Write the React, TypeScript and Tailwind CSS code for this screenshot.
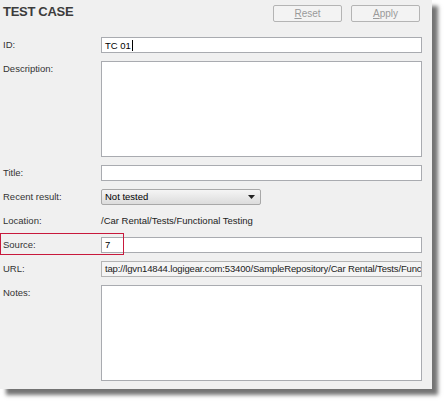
const labelCls = 'w-[98px] shrink-0 leading-[16px] text-[#333]';
const boxCls = 'h-[16px] w-[321px] border border-[#a9abb0] bg-white px-[3px] leading-[14px] text-black';

function Row({ label, children, tall }: { label: string; children: React.ReactNode; tall?: boolean }) {
    return (
        <div className={`flex items-start ${tall ? 'h-[96px]' : 'h-[16px]'}`}>
            <div className={labelCls}>{label}</div>
            {children}
        </div>
    );
}

function Btn({ first, rest }: { first: string; rest: string }) {
    return (
        <button className='h-[17px] w-[69px] rounded-[2px] border border-[#b4b4b4] bg-[#f3f3f3] text-center text-[10px] leading-[15px] text-[#9a9a9a]'>
            <span className='underline'>{first}</span>{rest}
        </button>
    );
}

const App = () => {
    return (
        <div className='h-[404px] w-[448px] bg-white font-["Liberation_Sans",Arial,sans-serif] text-[9.5px]'>
            <div className='relative h-[389px] w-[432px] bg-[#f0f0f0] pl-[3px] shadow-[6px_6px_4px_rgba(0,0,0,0.55)]'>
                {/* header */}
                <div className='flex h-[37px] items-start justify-between pr-[12px]'>
                    <h1 className='pt-[4px] text-[13px] font-bold leading-[16px] tracking-[-0.3px] text-[#3c3c3c]'>TEST CASE</h1>
                    <div className='flex gap-[9px] pt-[5px]'>
                        <Btn first='R' rest='eset' />
                        <Btn first='A' rest='pply' />
                    </div>
                </div>

                <div className='flex flex-col gap-[8px]'>
                    <Row label='ID:'>
                        <div className={boxCls}>
                            TC 01<span className='ml-[1px] inline-block h-[11px] w-[1px] translate-y-[2px] bg-black' />
                        </div>
                    </Row>
                    <Row label='Description:' tall>
                        <div className='h-[96px] w-[321px] border border-[#a9abb0] bg-white' />
                    </Row>
                    <Row label='Title:'>
                        <div className={boxCls} />
                    </Row>
                    <Row label='Recent result:'>
                        <div className='flex h-[16px] w-[160px] items-center justify-between rounded-[2px] border border-[#a8a8a8] bg-gradient-to-b from-[#f5f5f5] to-[#dcdcdc] pl-[3px] pr-[5px] text-black'>
                            <span>Not tested</span>
                            <svg width='7' height='4' viewBox='0 0 7 4'>
                                <path d='M0 0h7L3.5 4z' fill='#222' />
                            </svg>
                        </div>
                    </Row>
                    <Row label='Location:'>
                        <div className='leading-[16px] text-[#222]'>/Car Rental/Tests/Functional Testing</div>
                    </Row>
                    <Row label='Source:'>
                        <div className={boxCls}>7</div>
                    </Row>
                    <Row label='URL:'>
                        <div className='h-[16px] w-[321px] overflow-hidden whitespace-nowrap border border-[#b4b4b4] bg-[#f4f4f4] px-[3px] leading-[14px] tracking-[-0.15px] text-[#222]'>
                            tap://lgvn14844.logigear.com:53400/SampleRepository/Car Rental/Tests/Functional Testing
                        </div>
                    </Row>
                    <Row label='Notes:' tall>
                        <div className='h-[96px] w-[321px] border border-[#a9abb0] bg-white' />
                    </Row>
                </div>

                {/* annotation box */}
                <div className='absolute left-0 top-[233px] h-[22px] w-[124px] border border-[#c8193c]' />
            </div>
        </div>
    );
};

export default App;
